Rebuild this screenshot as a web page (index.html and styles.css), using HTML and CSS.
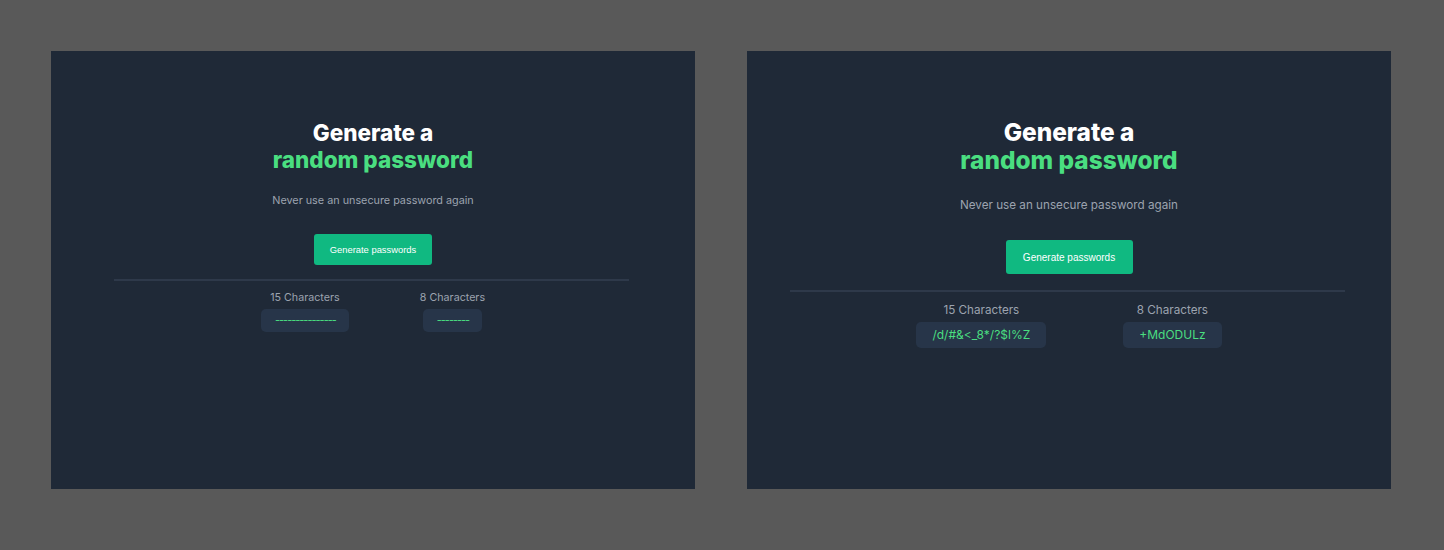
FILE: index.html
```html
<!DOCTYPE html>
<html lang="en">
<head>
<meta charset="utf-8">
<title>Password generator</title>
<link rel="stylesheet" href="styles.css">
</head>
<body>
<div class="stage">
  <section class="panel panel--a">
    <h1 class="title">Generate a<br><span class="accent">random password</span></h1>
    <p class="subtitle">Never use an unsecure password again</p>
    <button class="btn" type="button">Generate passwords</button>
    <hr class="divider">
    <div class="results">
      <div class="result">
        <span class="label">15 Characters</span>
        <span class="pw pw--empty">---------------</span>
      </div>
      <div class="result">
        <span class="label">8 Characters</span>
        <span class="pw pw--empty">--------</span>
      </div>
    </div>
  </section>
  <section class="panel panel--b">
    <h1 class="title">Generate a<br><span class="accent">random password</span></h1>
    <p class="subtitle">Never use an unsecure password again</p>
    <button class="btn" type="button">Generate passwords</button>
    <hr class="divider">
    <div class="results">
      <div class="result">
        <span class="label">15 Characters</span>
        <span class="pw">/d/#&amp;&lt;_8*/?$l%Z</span>
      </div>
      <div class="result">
        <span class="label">8 Characters</span>
        <span class="pw">+MdODULz</span>
      </div>
    </div>
  </section>
</div>
</body>
</html>
```
FILE: styles.css
```css
* { box-sizing: border-box; }
html, body { margin: 0; padding: 0; }
body {
  background: #595959;
  width: 1444px;
  height: 550px;
  overflow: hidden;
  font-family: Inter, "Liberation Sans", sans-serif;
}
.stage {
  display: flex;
  gap: 52px;
  padding: 51px 53px 0 51px;
}
.panel {
  width: 644px;
  height: 438px;
  background: #1F2937;
  display: flex;
  flex-direction: column;
  align-items: center;
}
.title {
  margin: 0;
  text-align: center;
  color: #ffffff;
  font-weight: 800;
}
.accent { color: #4ADE80; }
.subtitle {
  margin: 0;
  color: #9CA3AF;
}
.btn {
  border: none;
  background: #10B981;
  color: #ffffff;
  font-family: "Liberation Sans", Arial, sans-serif;
  border-radius: 3px;
  padding: 0;
}
.divider {
  align-self: stretch;
  border: none;
  border-top: 2px solid #2E394A;
  margin: 0;
}
.results {
  display: flex;
  justify-content: center;
}
.result {
  display: flex;
  flex-direction: column;
  align-items: center;
}
.label { color: #9CA3AF; }
.pw {
  background: #273549;
  color: #4ADE80;
  border-radius: 5px;
  text-align: center;
}
.pw--empty { letter-spacing: -1px; }

/* left panel */
.panel--a { padding-top: 68px; }
.panel--a .title { font-size: 22.5px; line-height: 27px; }
.panel--a .subtitle { font-size: 10.8px; line-height: 14px; margin-top: 21px; }
.panel--a .btn { width: 118px; height: 31px; font-size: 9.4px; margin-top: 26px; }
.panel--a .divider { margin: 14px 66px 0 63px; }
.panel--a .results { gap: 71px; margin-top: 10px; }
.panel--a .label { font-size: 10.7px; line-height: 14px; }
.panel--a .pw { font-size: 11px; line-height: 23px; height: 23px; padding: 0 13px 0 14px; margin-top: 4px; }

/* right panel */
.panel--b { padding-top: 67px; }
.panel--b .title { font-size: 24.4px; line-height: 28px; }
.panel--b .subtitle { font-size: 11.7px; line-height: 15px; margin-top: 24px; }
.panel--b .btn { width: 127px; height: 34px; font-size: 10px; margin-top: 27px; }
.panel--b .divider { margin: 16px 46px 0 43px; }
.panel--b .results { gap: 77px; margin-top: 11px; }
.panel--b .label { font-size: 11.7px; line-height: 15px; }
.panel--b .pw { font-size: 12px; line-height: 26px; height: 26px; padding: 0 16px; margin-top: 4px; }
```
